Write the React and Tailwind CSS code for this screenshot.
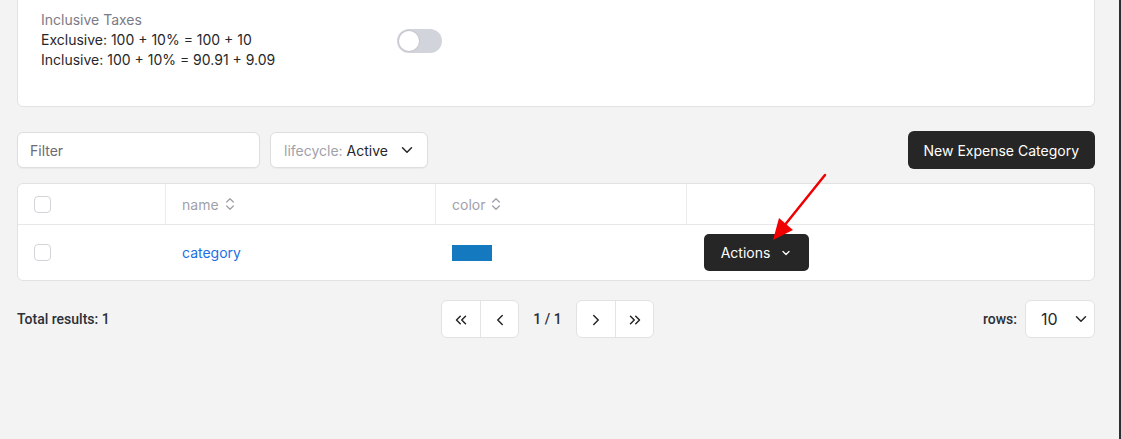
import { ChevronDown, ChevronsUpDown, ChevronsLeft, ChevronLeft, ChevronRight, ChevronsRight } from 'lucide-react';

const rows = [{ name: 'category', color: '#1479bf' }];

const Checkbox = () => (
  <span className="block w-[17px] h-[17px] rounded-[4px] border border-[#d4d4d8] bg-white" />
);

const PageButton = ({ children, first }) => (
  <button className={`w-[38px] h-[37px] flex items-center justify-center text-[#27272a] ${first ? '' : 'border-l border-[#e4e4e4]'}`}>
    {children}
  </button>
);

const App = () => {
  return (
    <div className="flex w-[1121px] h-[439px] overflow-hidden bg-[#f3f3f3] font-['Inter','Liberation_Sans',sans-serif] text-[14px] text-[#27272a]">
      <div className="relative flex-1 pl-[17px] pr-[24px]">
        {/* Tax settings card */}
        <div className="-mt-[8px] bg-white border border-[#e2e2e2] rounded-[6px] pl-[23px] pt-[17px] pb-[36px]">
          <div className="flex items-start">
            <div className="w-[356px] leading-[20px]">
              <div className="text-[#7b7b85]">Inclusive Taxes</div>
              <div>Exclusive: 100 + 10% = 100 + 10</div>
              <div>Inclusive: 100 + 10% = 90.91 + 9.09</div>
            </div>
            <div className="mt-[19px] w-[45px] h-[24px] rounded-full bg-[#d1d4da] p-[2px]">
              <span className="block w-[20px] h-[20px] rounded-full bg-white shadow-[0_0_0_1px_#c8cad0]" />
            </div>
          </div>
        </div>

        {/* Toolbar */}
        <div className="mt-[24px] flex items-center">
          <div className="w-[243px] h-[36px] bg-white border border-[#dedede] rounded-[6px] shadow-[0_1px_1px_rgba(0,0,0,0.04)] flex items-center px-[12px] text-[#6b6b73]">
            Filter
          </div>
          <div className="ml-[10px] w-[158px] h-[36px] bg-white border border-[#dedede] rounded-[6px] shadow-[0_1px_1px_rgba(0,0,0,0.04)] flex items-center pl-[13px] gap-[10px]">
            <span>
              <span className="text-[#a1a1aa]">lifecycle: </span>
              <span className="text-[#27272a]">Active</span>
            </span>
            <ChevronDown size={18} strokeWidth={2} className="text-[#27272a]" />
          </div>
          <button className="ml-auto h-[38px] px-[16px] rounded-[6px] bg-[#262626] text-white">
            New Expense Category
          </button>
        </div>

        {/* Table */}
        <div className="mt-[14px] bg-white border border-[#e2e2e2] rounded-[6px] overflow-hidden">
          <div className="flex h-[41px] border-b border-[#e8e8e8] text-[#a1a1aa]">
            <div className="w-[148px] flex items-center pl-[16px] border-r border-[#ececec]">
              <Checkbox />
            </div>
            <div className="w-[270px] flex items-center pl-[16px] gap-[3px] border-r border-[#ececec]">
              name <ChevronsUpDown size={16} strokeWidth={2} />
            </div>
            <div className="w-[251px] flex items-center pl-[16px] gap-[3px] border-r border-[#ececec]">
              color <ChevronsUpDown size={16} strokeWidth={2} />
            </div>
            <div className="flex-1" />
          </div>
          {rows.map((row) => (
            <div key={row.name} className="flex h-[55px] items-center">
              <div className="w-[148px] pl-[16px]">
                <Checkbox />
              </div>
              <div className="w-[270px] pl-[16px] text-[#1c6fe3]">{row.name}</div>
              <div className="w-[251px] pl-[16px]">
                <span className="block w-[40px] h-[16px]" style={{ backgroundColor: row.color }} />
              </div>
              <div className="flex-1 pl-[17px]">
                <button className="h-[37px] w-[105px] rounded-[5px] bg-[#262626] text-white flex items-center justify-center gap-[10px]">
                  Actions <ChevronDown size={12} strokeWidth={2.5} />
                </button>
              </div>
            </div>
          ))}
        </div>

        {/* Footer */}
        <div className="mt-[19px] flex items-center font-['Roboto','Liberation_Sans',sans-serif] font-medium text-[#2b2f38]">
          <div className="w-[424px]">Total results: 1</div>
          <div className="flex h-[38px] bg-white border border-[#e2e2e2] rounded-[6px] overflow-hidden">
            <PageButton first><ChevronsLeft size={18} strokeWidth={2} /></PageButton>
            <PageButton><ChevronLeft size={18} strokeWidth={2} /></PageButton>
          </div>
          <div className="w-[57px] text-center">1 / 1</div>
          <div className="flex h-[38px] bg-white border border-[#e2e2e2] rounded-[6px] overflow-hidden">
            <PageButton first><ChevronRight size={18} strokeWidth={2} /></PageButton>
            <PageButton><ChevronsRight size={18} strokeWidth={2} /></PageButton>
          </div>
          <div className="flex-1 flex items-center justify-end gap-[8px]">
            <span>rows:</span>
            <div className="w-[70px] h-[38px] bg-white border border-[#e2e2e2] rounded-[6px] flex items-center pl-[15px] gap-[14px] font-['Inter','Liberation_Sans',sans-serif] font-normal text-[16px] text-[#27272a]">
              10 <ChevronDown size={18} strokeWidth={2} />
            </div>
          </div>
        </div>

        {/* Annotation arrow */}
        <svg className="absolute left-0 top-0 pointer-events-none" width="1119" height="439">
          <line x1="825" y1="175" x2="784" y2="226" stroke="#f00000" strokeWidth="2.5" strokeLinecap="round" />
          <polygon points="773,240 779,218 793,230" fill="#f00000" />
        </svg>
      </div>
      <div className="w-[2px] bg-[#2b2e33]" />
    </div>
  );
};

export default App;
